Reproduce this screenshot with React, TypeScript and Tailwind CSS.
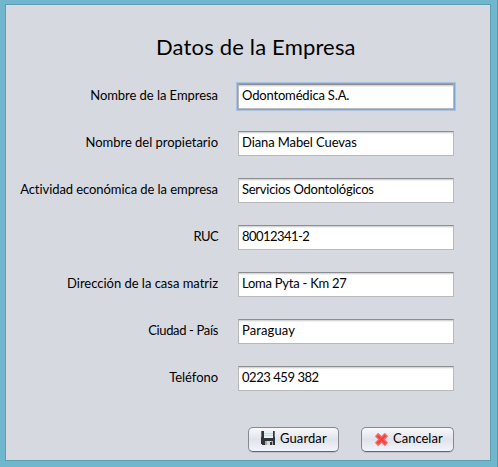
type Field = {
  label: string;
  value: string;
  labelSpacing: string;
  valueSpacing: string;
  focused?: boolean;
};

const fields: Field[] = [
  { label: "Nombre de la Empresa", value: "Odontomédica S.A.", labelSpacing: "tracking-[-0.05px]", valueSpacing: "tracking-[-0.17px]", focused: true },
  { label: "Nombre del propietario", value: "Diana Mabel Cuevas", labelSpacing: "tracking-[-0.02px]", valueSpacing: "tracking-[-0.1px]" },
  { label: "Actividad económica de la empresa", value: "Servicios Odontológicos", labelSpacing: "tracking-[-0.07px]", valueSpacing: "tracking-[-0.26px]" },
  { label: "RUC", value: "80012341-2", labelSpacing: "tracking-[-0.6px]", valueSpacing: "tracking-[-0.55px]" },
  { label: "Dirección de la casa matriz", value: "Loma Pyta - Km 27", labelSpacing: "tracking-[-0.02px]", valueSpacing: "tracking-[-0.25px]" },
  { label: "Ciudad - País", value: "Paraguay", labelSpacing: "tracking-[-0.35px]", valueSpacing: "tracking-[0.1px]" },
  { label: "Teléfono", value: "0223 459 382", labelSpacing: "tracking-[-0.05px]", valueSpacing: "tracking-[-0.45px]" },
];

function FieldRow({ label, value, labelSpacing, valueSpacing, focused }: Field) {
  return (
    <div className="flex h-[25px] items-center gap-5">
      <label className={`h-[25px] w-[212px] text-right leading-[23px] ${labelSpacing}`}>{label}</label>
      <div
        className={`h-[25px] w-[216px] border border-[#b9b9bb] border-t-[#8d8e92] bg-white pl-[3px] leading-[20px] shadow-[inset_0_1px_0_#d5d6d8,inset_0_2px_0_#f1f1f1] ${
          focused ? "ring-1 ring-[#7ba7d6] outline-1 outline-[#a9c3e0] outline-offset-1" : ""
        }`}
      >
        <span className={valueSpacing}>{value}</span>
      </div>
    </div>
  );
}

function SaveIcon() {
  return (
    <svg className="mb-[3px]" width="14" height="14" viewBox="0 0 14 14" shapeRendering="crispEdges">
      <path d="M0 0h14v14H1L0 13z" fill="#30353b" />
      <path d="M0 0h1v6H0zM13 0h1v6h-1z" fill="#656b72" />
      <path d="M3 0h9v7H3z" fill="#e9f2f5" />
      <path d="M3 2h9v1H3zM3 4h9v1H3z" fill="#ccd7dc" />
      <path d="M4 10h8v4H4z" fill="#a9aaa6" />
      <path d="M6 10h4v4H6z" fill="#dedbd0" />
      <path d="M9 11h2v3H9z" fill="#30353b" />
    </svg>
  );
}

function CancelIcon() {
  return (
    <svg width="13" height="13" viewBox="0 0 13 13">
      <path
        d="M3.200.8 6.500 4 9.800.8 12.200 3.200 9 6.500l3.200 3.300-2.400 2.400L6.500 9l-3.300 3.200L.8 9.800 4 6.500.8 3.200z"
        fill="#f6403e"
        stroke="#fb6862"
        strokeWidth="1.3"
        strokeLinejoin="round"
      />
    </svg>
  );
}

const buttonStyle =
  "flex h-[25px] items-center rounded-[5px] border border-[#85888f] border-b-[#63666d] bg-linear-to-b from-[#f8f9fb] via-[#e0e3ea] to-[#f1f4fa] shadow-[0_1px_0_#bfc2ca] leading-[21px]";

export default function App() {
  return (
    <div className="h-[467px] w-[498px] border-r border-[#5598ad] bg-[#70b6cd] pt-1 pl-[5px] font-['Lato',sans-serif] text-[13px] text-black">
      <main className="h-[457px] w-[486px] border border-[#5b9db2] bg-[#d6d9e0]">
        <h1 className="ml-[150px] pt-[26px] text-[22px] leading-8 tracking-[0.17px] whitespace-nowrap">Datos de la Empresa</h1>
        <form className="mt-[21px] flex flex-col gap-[22px]">
          {fields.map((field) => (
            <FieldRow key={field.label} {...field} />
          ))}
        </form>
        <div className="mt-9 ml-[242px] flex gap-[22px]">
          <button className={`${buttonStyle} w-[91px] gap-[5px] pl-3`}>
            <SaveIcon />
            <span className="pb-0.5 tracking-[0.1px]">Guardar</span>
          </button>
          <button className={`${buttonStyle} w-[93px] gap-[5px] pl-[13px]`}>
            <CancelIcon />
            <span className="pb-0.5">Cancelar</span>
          </button>
        </div>
      </main>
    </div>
  );
}
